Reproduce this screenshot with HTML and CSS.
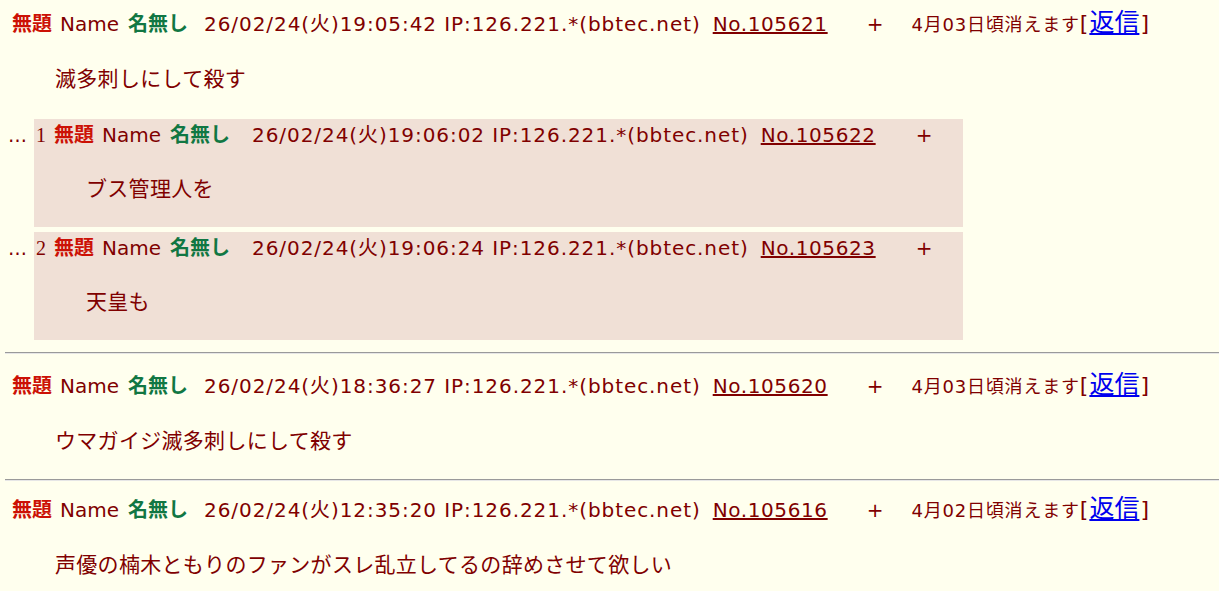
FILE: index.html
```html
<!DOCTYPE html>
<html lang="ja">
<head>
<meta charset="utf-8">
<title>futaba</title>
<link rel="stylesheet" href="styles.css">
</head>
<body>
<div class="thread">
  <div class="head">
    <span class="sub">無題</span><span class="lbl">Name</span><span class="name">名無し</span><span class="date">26/02/24(火)19:05:42 IP:126.221.*(bbtec.net)</span><a class="no" href="#">No.105621</a><span class="del">+</span><span class="exp">4月03日頃消えます</span><span class="br">[</span><a class="res" href="#">返信</a><span class="br">]</span>
  </div>
  <blockquote class="body">滅多刺しにして殺す</blockquote>
  <div class="replies">
    <div class="rrow">
      <div class="dots">…</div>
      <div class="rtd">
        <div class="head rhead">
          <span class="rsc">1</span><span class="sub">無題</span><span class="lbl">Name</span><span class="name">名無し</span><span class="date rdate">26/02/24(火)19:06:02 IP:126.221.*(bbtec.net)</span><a class="no" href="#">No.105622</a><span class="del">+</span>
        </div>
        <blockquote class="body rbody">ブス管理人を</blockquote>
      </div>
    </div>
    <div class="rrow">
      <div class="dots">…</div>
      <div class="rtd">
        <div class="head rhead">
          <span class="rsc">2</span><span class="sub">無題</span><span class="lbl">Name</span><span class="name">名無し</span><span class="date rdate">26/02/24(火)19:06:24 IP:126.221.*(bbtec.net)</span><a class="no" href="#">No.105623</a><span class="del">+</span>
        </div>
        <blockquote class="body rbody">天皇も</blockquote>
      </div>
    </div>
  </div>
</div>
<hr class="sep sep1">
<div class="thread">
  <div class="head">
    <span class="sub">無題</span><span class="lbl">Name</span><span class="name">名無し</span><span class="date">26/02/24(火)18:36:27 IP:126.221.*(bbtec.net)</span><a class="no" href="#">No.105620</a><span class="del">+</span><span class="exp">4月03日頃消えます</span><span class="br">[</span><a class="res" href="#">返信</a><span class="br">]</span>
  </div>
  <blockquote class="body">ウマガイジ滅多刺しにして殺す</blockquote>
</div>
<hr class="sep sep2">
<div class="thread">
  <div class="head">
    <span class="sub">無題</span><span class="lbl">Name</span><span class="name">名無し</span><span class="date">26/02/24(火)12:35:20 IP:126.221.*(bbtec.net)</span><a class="no" href="#">No.105616</a><span class="del">+</span><span class="exp">4月02日頃消えます</span><span class="br">[</span><a class="res" href="#">返信</a><span class="br">]</span>
  </div>
  <blockquote class="body">声優の楠木ともりのファンがスレ乱立してるの辞めさせて欲しい</blockquote>
</div>
</body>
</html>
```

FILE: styles.css
```css
html, body {
  background: #ffffee;
}
body {
  margin: 0;
  padding: 11px 0 0 5px;
  color: #800000;
  font-family: "DejaVu Sans", "Noto Sans CJK JP", sans-serif;
  font-size: 20px;
  overflow: hidden;
}
.thread {
  display: flex;
  flex-direction: column;
}
.head {
  display: flex;
  align-items: baseline;
  height: 24px;
  line-height: 24px;
  padding-left: 7px;
  white-space: nowrap;
}
.sub {
  color: #cc1105;
  font-weight: bold;
}
.lbl {
  margin-left: 8px;
}
.name {
  color: #117743;
  font-weight: bold;
  margin-left: 9px;
}
.date {
  margin-left: 16px;
  letter-spacing: 0.93px;
}
.no {
  color: #800000;
  text-decoration: underline;
  margin-left: 12px;
  letter-spacing: 0.6px;
}
.del {
  margin-left: 39px;
}
.exp {
  margin-left: 28px;
  font-size: 18px;
  letter-spacing: 0.8px;
}
.br {
  font-size: 22px;
}
.res {
  color: #0000ee;
  font-size: 25px;
  text-decoration: underline;
  margin: 0 1px;
}
.body {
  margin: 30px 0 0 50px;
  line-height: 24px;
  font-size: 21px;
  letter-spacing: 0.3px;
  font-family: "Noto Sans CJK JP", sans-serif;
}
.replies {
  display: flex;
  flex-direction: column;
  gap: 5px;
  margin: 30px 0 0 3px;
}
.rrow {
  display: flex;
  align-items: flex-start;
}
.dots {
  width: 26px;
  padding-top: 4px;
  line-height: 24px;
  font-family: "DejaVu Sans", sans-serif;
  font-size: 19px;
  letter-spacing: 1px;
}
.rtd {
  width: 929px;
  height: 108px;
  box-sizing: border-box;
  background: #f0e0d6;
  padding: 4px 0 0 2px;
}
.rhead {
  padding-left: 0;
}
.rsc {
  font-family: "Liberation Serif", serif;
  font-size: 20px;
  width: 8px;
}
.rhead .sub {
  margin-left: 10px;
}
.rdate {
  margin-left: 22px;
}
.rhead .del {
  margin-left: 40px;
}
.rbody {
  margin: 28px 0 0 50px;
}
.sep {
  margin: 12px 0 0 0;
  height: 0;
  border: 0;
  border-top: 1px solid #9a9a9a;
  border-bottom: 1px solid #e6e6e6;
}
.sep1 + .thread .head {
  margin-top: 19px;
}
.sep2 {
  margin-top: 28px;
}
.sep2 + .thread .head {
  margin-top: 16px;
}
```
